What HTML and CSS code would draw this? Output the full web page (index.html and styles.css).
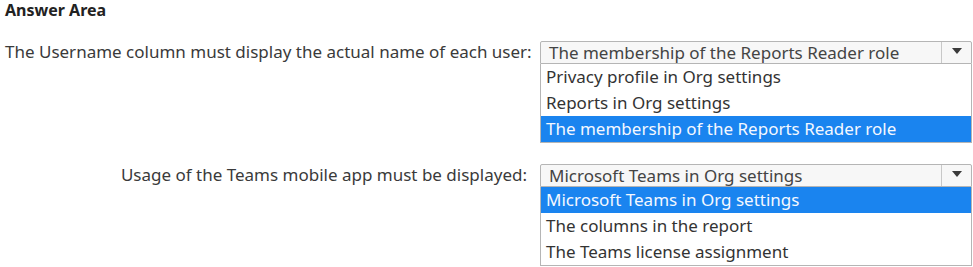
FILE: index.html
```html
<!DOCTYPE html>
<html>
<head>
<meta charset="utf-8">
<link rel="stylesheet" href="styles.css">
</head>
<body>
<div class="page">
  <div class="title">Answer Area</div>
  <div class="row row-first">
    <div class="label">The Username column must display the actual name of each user:</div>
    <div class="dropdown">
      <div class="select">
        <span class="value">The membership of the Reports Reader role</span>
        <span class="btn"><svg width="10" height="6" viewBox="0 0 10 6"><path d="M0 0H10L5 6Z" fill="#3a3a3a"/></svg></span>
      </div>
      <ul class="list">
        <li>Privacy profile in Org settings</li>
        <li>Reports in Org settings</li>
        <li class="sel">The membership of the Reports Reader role</li>
      </ul>
    </div>
  </div>
  <div class="row row-second">
    <div class="label">Usage of the Teams mobile app must be displayed:</div>
    <div class="dropdown">
      <div class="select">
        <span class="value">Microsoft Teams in Org settings</span>
        <span class="btn"><svg width="10" height="6" viewBox="0 0 10 6"><path d="M0 0H10L5 6Z" fill="#3a3a3a"/></svg></span>
      </div>
      <ul class="list">
        <li class="sel">Microsoft Teams in Org settings</li>
        <li>The columns in the report</li>
        <li>The Teams license assignment</li>
      </ul>
    </div>
  </div>
</div>
</body>
</html>
```

FILE: styles.css
```css
* { box-sizing: border-box; }
html, body { margin: 0; padding: 0; background: #fff; }
body {
  font-family: "Noto Sans", "Open Sans", sans-serif;
  color: #333;
  width: 973px;
  height: 267px;
  overflow: hidden;
}
.page { padding: 1px 0 0 5px; }
.title {
  font-weight: 700;
  font-size: 16px;
  line-height: 18px;
  color: #222;
}
.row {
  display: flex;
  align-items: flex-start;
}
.row-first { margin-top: 22px; }
.row-second { margin-top: 21px; }
.label {
  width: 522px;
  text-align: right;
  font-size: 17px;
  line-height: 22px;
  margin-right: 13px;
  color: #3a3a3a;
  white-space: nowrap;
}
.dropdown {
  width: 432px;
}
.select {
  display: flex;
  height: 23px;
  border: 1px solid #b5b5b5;
  background: #f7f7f7;
  border-radius: 2px 2px 0 0;
}
.value {
  flex: 1;
  font-size: 17px;
  line-height: 21px;
  padding-left: 8px;
  color: #444;
  white-space: nowrap;
}
.btn {
  width: 30px;
  border-left: 1px solid #c8c8c8;
  display: flex;
  align-items: center;
  justify-content: center;
  padding-bottom: 4px;
}
.list {
  list-style: none;
  margin: 0;
  padding: 0;
  border: 1px solid #b5b5b5;
  border-top: none;
  background: #fff;
}
.list li {
  font-size: 17px;
  line-height: 26px;
  height: 26px;
  padding-left: 5px;
  color: #333;
  white-space: nowrap;
}
.list li.sel {
  background: #1a84ef;
  color: #f4f8ff;
}
```
